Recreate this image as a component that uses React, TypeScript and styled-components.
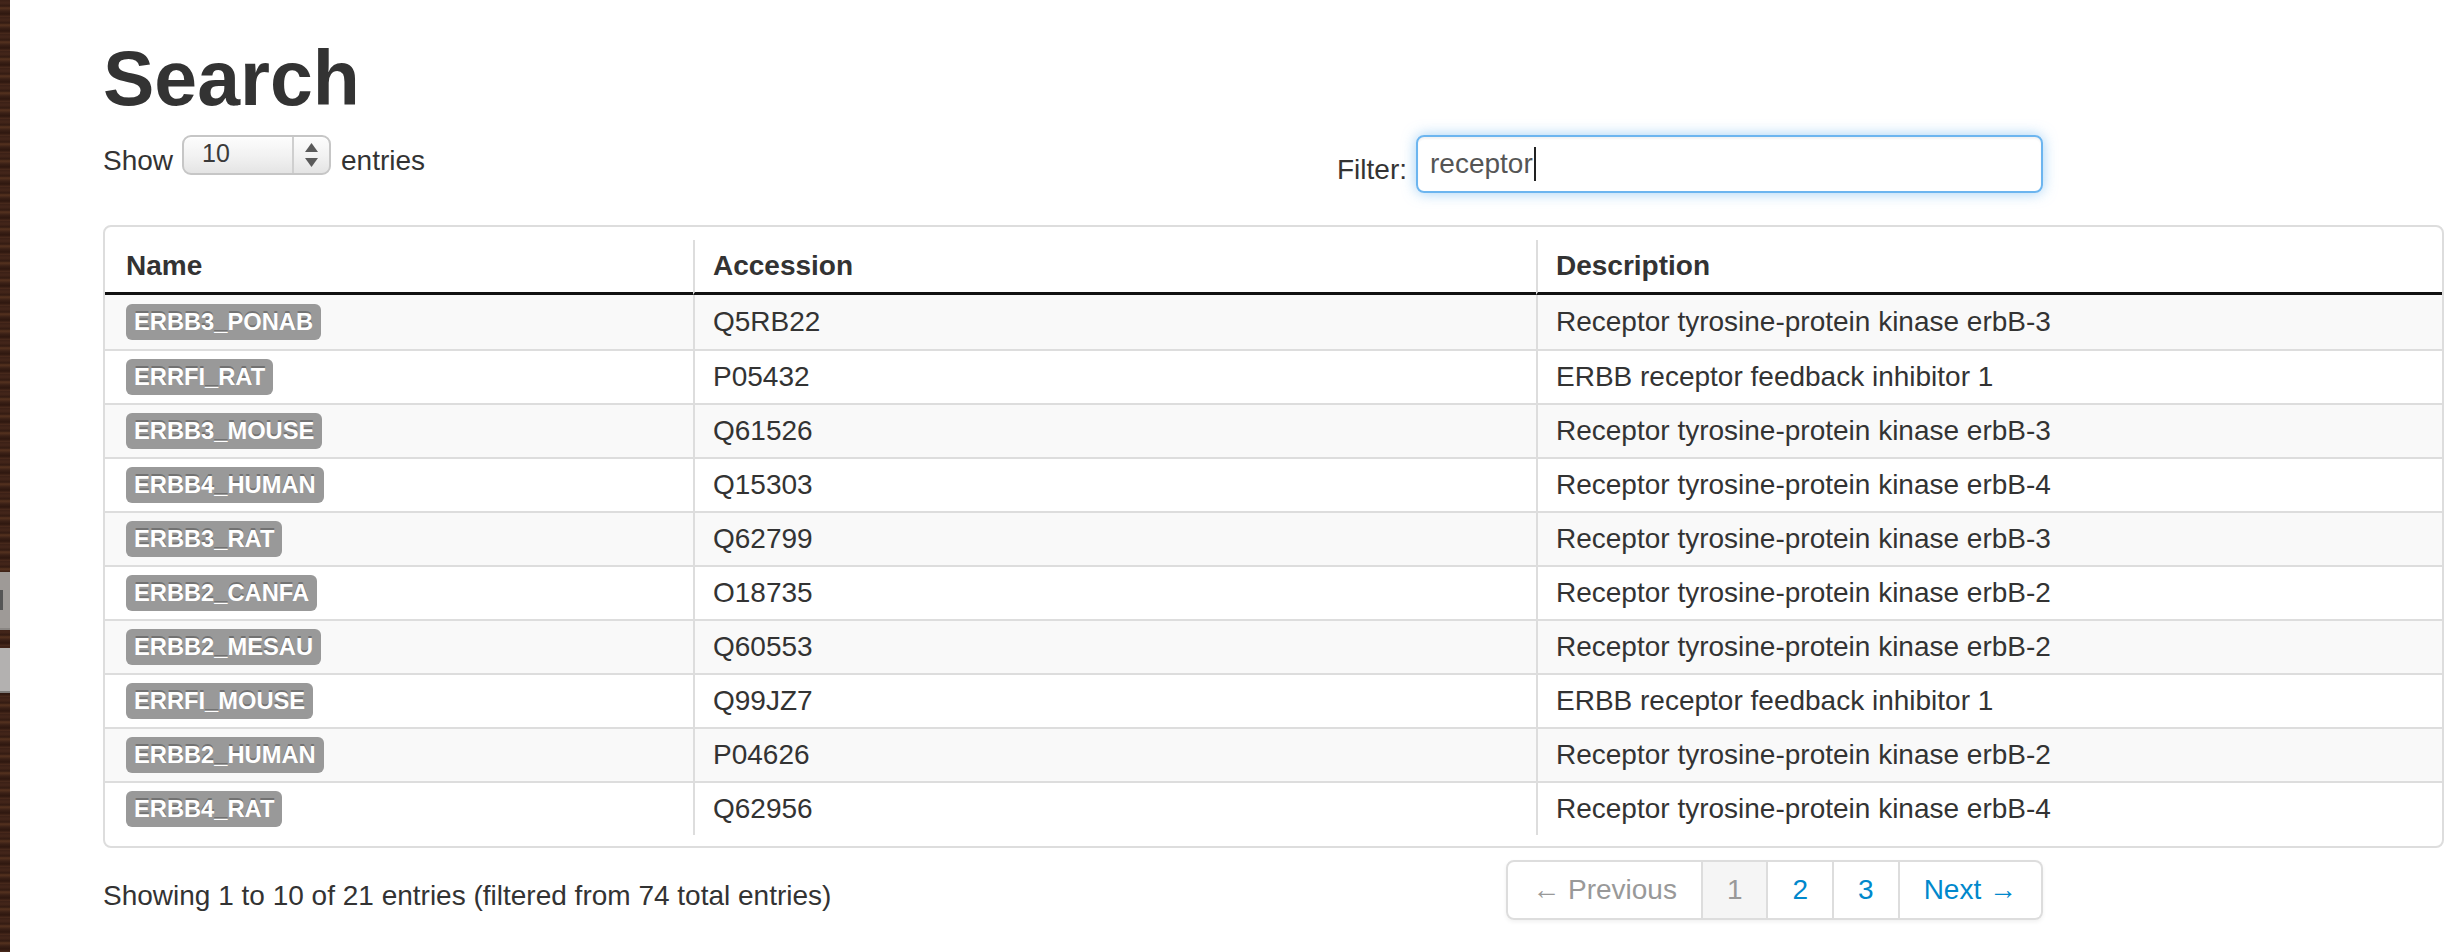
import React from "react";
import styled, { createGlobalStyle } from "styled-components";

const GlobalStyle = createGlobalStyle`
  html, body {
    margin: 0;
    padding: 0;
    background: #ffffff;
  }
  body {
    font-family: "Liberation Sans", Arial, Helvetica, sans-serif;
    color: #333333;
  }
  * { box-sizing: border-box; }
`;

const Frame = styled.div`
  display: flex;
  min-height: 952px;
  width: 2458px;
`;

const WoodStrip = styled.div`
  width: 10px;
  flex-shrink: 0;
  display: flex;
  flex-direction: column;
  padding-top: 572px;
  background:
    repeating-linear-gradient(
      180deg,
      #3b2016 0px,
      #44261a 3px,
      #331b12 6px,
      #55321f 8px,
      #3a2016 11px,
      #2e170f 14px,
      #4b2b1d 17px
    );
`;

const StripTab = styled.div<{ $tone: "dark" | "light" }>`
  height: ${(p) => (p.$tone === "dark" ? "58px" : "45px")};
  margin-bottom: ${(p) => (p.$tone === "dark" ? "18px" : "0")};
  background: ${(p) => (p.$tone === "dark" ? "#9e9a97" : "#b3b1b0")};
  border-bottom: 2px solid ${(p) => (p.$tone === "dark" ? "#8a8683" : "#7f7c7a")};
  display: flex;
  align-items: center;
`;

const TabMark = styled.span`
  width: 3px;
  height: 20px;
  background: #555;
`;

const Page = styled.main`
  flex: 1;
  padding: 38px 0 0 93px;
`;

const Content = styled.div`
  width: 2341px;
`;

const Title = styled.h1`
  margin: 0;
  font-size: 77px;
  line-height: 80px;
  font-weight: bold;
  color: #333;
`;

const Toolbar = styled.div`
  width: 1940px;
  display: flex;
  justify-content: space-between;
  align-items: flex-start;
  margin-top: 17px;
`;

const LengthGroup = styled.div`
  display: flex;
  align-items: flex-end;
  font-size: 28px;
  line-height: 28px;
`;

const Word = styled.span<{ $gap?: number }>`
  margin-left: ${(p) => p.$gap ?? 0}px;
`;

const SelectBox = styled.div`
  margin-left: 9px;
  width: 149px;
  height: 40px;
  border: 2px solid #c6c6c6;
  border-radius: 9px;
  background: linear-gradient(180deg, #fdfdfd 0%, #f1f1f1 55%, #e4e4e4 100%);
  box-shadow: inset 0 1px 0 #fff;
  display: flex;
  align-items: stretch;
`;

const SelectValue = styled.span`
  flex: 1;
  padding-left: 18px;
  font-size: 25px;
  line-height: 32px;
  color: #3a3a3a;
`;

const SelectArrows = styled.span`
  width: 37px;
  border-left: 2px solid #cfcfcf;
  display: flex;
  align-items: center;
  justify-content: center;
`;

const FilterGroup = styled.div`
  display: flex;
  align-items: flex-start;
  font-size: 28px;
  line-height: 28px;
`;

const FilterLabel = styled.span`
  margin-top: 21px;
  margin-right: 9px;
`;

const FilterInput = styled.div`
  width: 627px;
  height: 58px;
  border: 2px solid rgba(82, 168, 236, 0.85);
  border-radius: 8px;
  box-shadow: inset 0 2px 2px rgba(0, 0, 0, 0.05), 0 0 14px rgba(82, 168, 236, 0.55);
  padding: 0 12px;
  display: flex;
  align-items: center;
  font-size: 28px;
  color: #555;
`;

const Caret = styled.span`
  display: inline-block;
  width: 2px;
  height: 34px;
  background: #222;
  margin-left: 1px;
`;

const TableWrap = styled.div`
  margin-top: 32px;
  border: 2px solid #dddddd;
  border-radius: 8px;
  padding: 13px 0 11px;
  overflow: hidden;
`;

const Table = styled.table`
  width: 100%;
  border-collapse: separate;
  border-spacing: 0;
  table-layout: fixed;
  font-size: 28px;
  line-height: 28px;
`;

const HeadCell = styled.th<{ $first?: boolean }>`
  text-align: left;
  font-weight: bold;
  height: 55px;
  padding: 0 0 0 ${(p) => (p.$first ? 21 : 18)}px;
  border-left: ${(p) => (p.$first ? "none" : "2px solid #dddddd")};
  border-bottom: 3px solid #111111;
  vertical-align: middle;
  color: #333;
`;

const Row = styled.tr<{ $striped: boolean }>`
  background: ${(p) => (p.$striped ? "#f9f9f9" : "#ffffff")};
`;

const Cell = styled.td<{ $first?: boolean; $topRow?: boolean }>`
  height: 54px;
  padding: 0 0 0 ${(p) => (p.$first ? 21 : 18)}px;
  border-left: ${(p) => (p.$first ? "none" : "2px solid #dddddd")};
  border-top: ${(p) => (p.$topRow ? "none" : "2px solid #dddddd")};
  vertical-align: middle;
  color: #333;
`;

const NameLabel = styled.span`
  display: inline-block;
  vertical-align: middle;
  background: #999999;
  color: #ffffff;
  font-weight: bold;
  font-size: 23.7px;
  line-height: 28px;
  padding: 4px 8px;
  border-radius: 6px;
  text-shadow: 0 -2px 0 rgba(0, 0, 0, 0.25);
`;

const Footer = styled.div`
  width: 1940px;
  display: flex;
  justify-content: space-between;
  align-items: flex-start;
  margin-top: 12px;
`;

const Info = styled.div`
  padding-top: 22px;
  font-size: 28px;
  line-height: 28px;
`;

const Pager = styled.ul`
  display: flex;
  margin: 0;
  padding: 0;
  list-style: none;
  border-radius: 8px;
  box-shadow: 0 2px 4px rgba(0, 0, 0, 0.06);
`;

type PageState = "disabled" | "active" | "normal";

const PageLink = styled.li<{ $state: PageState; $pos: "first" | "middle" | "last" }>`
  padding: 8px 24px;
  font-size: 28px;
  line-height: 40px;
  border: 2px solid #dddddd;
  border-left-width: ${(p) => (p.$pos === "first" ? 2 : 0)}px;
  border-radius: ${(p) =>
    p.$pos === "first" ? "8px 0 0 8px" : p.$pos === "last" ? "0 8px 8px 0" : "0"};
  background: ${(p) => (p.$state === "active" ? "#f5f5f5" : "#ffffff")};
  color: ${(p) => (p.$state === "normal" ? "#0088cc" : "#999999")};
  white-space: nowrap;
`;

const rows = [
  ["ERBB3_PONAB", "Q5RB22", "Receptor tyrosine-protein kinase erbB-3"],
  ["ERRFI_RAT", "P05432", "ERBB receptor feedback inhibitor 1"],
  ["ERBB3_MOUSE", "Q61526", "Receptor tyrosine-protein kinase erbB-3"],
  ["ERBB4_HUMAN", "Q15303", "Receptor tyrosine-protein kinase erbB-4"],
  ["ERBB3_RAT", "Q62799", "Receptor tyrosine-protein kinase erbB-3"],
  ["ERBB2_CANFA", "O18735", "Receptor tyrosine-protein kinase erbB-2"],
  ["ERBB2_MESAU", "Q60553", "Receptor tyrosine-protein kinase erbB-2"],
  ["ERRFI_MOUSE", "Q99JZ7", "ERBB receptor feedback inhibitor 1"],
  ["ERBB2_HUMAN", "P04626", "Receptor tyrosine-protein kinase erbB-2"],
  ["ERBB4_RAT", "Q62956", "Receptor tyrosine-protein kinase erbB-4"],
];

const pages: { text: string; state: PageState }[] = [
  { text: "\u2190 Previous", state: "disabled" },
  { text: "1", state: "active" },
  { text: "2", state: "normal" },
  { text: "3", state: "normal" },
  { text: "Next \u2192", state: "normal" },
];

export default function App() {
  return (
    <>
      <GlobalStyle />
      <Frame>
        <WoodStrip>
          <StripTab $tone="dark">
            <TabMark />
          </StripTab>
          <StripTab $tone="light" />
        </WoodStrip>
        <Page>
          <Content>
            <Title>Search</Title>
            <Toolbar>
              <LengthGroup>
                <Word>Show</Word>
                <SelectBox>
                  <SelectValue>10</SelectValue>
                  <SelectArrows>
                    <svg width="13" height="25" viewBox="0 0 13 25">
                      <path d="M6.5 0 L13 9 L0 9 Z" fill="#5a5a5a" />
                      <path d="M0 15 L13 15 L6.5 24 Z" fill="#5a5a5a" />
                    </svg>
                  </SelectArrows>
                </SelectBox>
                <Word $gap={10}>entries</Word>
              </LengthGroup>
              <FilterGroup>
                <FilterLabel>Filter:</FilterLabel>
                <FilterInput>
                  receptor
                  <Caret />
                </FilterInput>
              </FilterGroup>
            </Toolbar>
            <TableWrap>
              <Table>
                <colgroup>
                  <col style={{ width: 588 }} />
                  <col style={{ width: 843 }} />
                  <col />
                </colgroup>
                <thead>
                  <tr>
                    <HeadCell $first>Name</HeadCell>
                    <HeadCell>Accession</HeadCell>
                    <HeadCell>Description</HeadCell>
                  </tr>
                </thead>
                <tbody>
                  {rows.map((r, i) => (
                    <Row key={r[0]} $striped={i % 2 === 0}>
                      <Cell $first $topRow={i === 0}>
                        <NameLabel>{r[0]}</NameLabel>
                      </Cell>
                      <Cell $topRow={i === 0}>{r[1]}</Cell>
                      <Cell $topRow={i === 0}>{r[2]}</Cell>
                    </Row>
                  ))}
                </tbody>
              </Table>
            </TableWrap>
            <Footer>
              <Info>Showing 1 to 10 of 21 entries (filtered from 74 total entries)</Info>
              <Pager>
                {pages.map((p, i) => (
                  <PageLink
                    key={p.text}
                    $state={p.state}
                    $pos={i === 0 ? "first" : i === pages.length - 1 ? "last" : "middle"}
                  >
                    {p.text}
                  </PageLink>
                ))}
              </Pager>
            </Footer>
          </Content>
        </Page>
      </Frame>
    </>
  );
}
